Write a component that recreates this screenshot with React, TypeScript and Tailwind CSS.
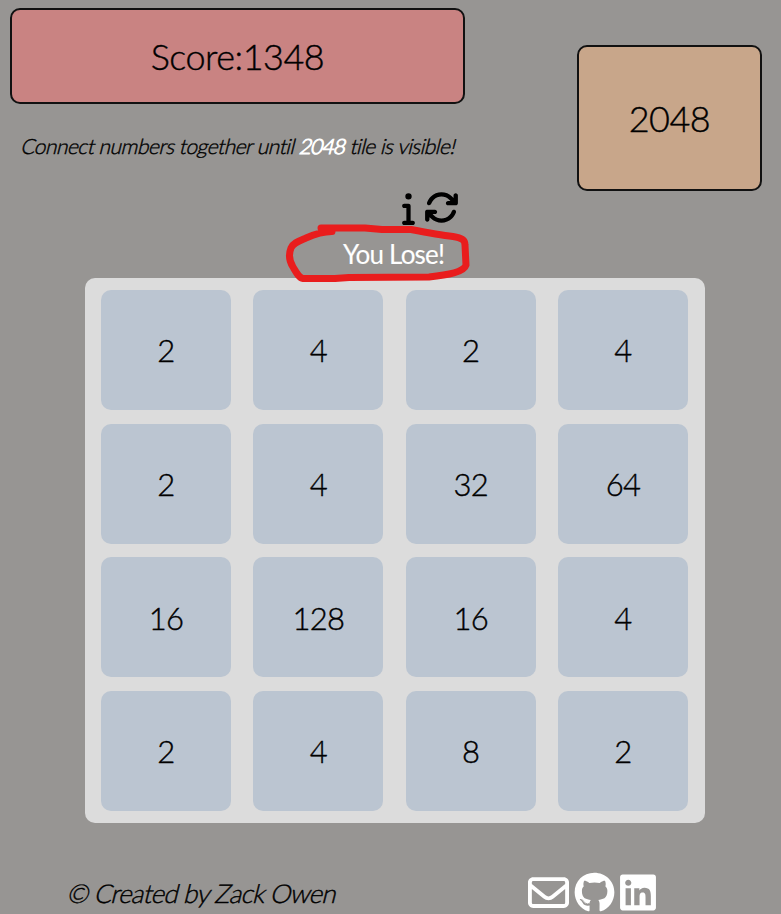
import { FaArrowsRotate, FaGithub, FaInfo, FaLinkedin, FaRegEnvelope } from "react-icons/fa6";

const board = [
  [2, 4, 2, 4],
  [2, 4, 32, 64],
  [16, 128, 16, 4],
  [2, 4, 8, 2],
];

function Header() {
  return (
    <header className="flex h-[189px] items-start justify-between pl-2.5 pr-[19px] pt-2">
      <div>
        <div className="flex h-24 w-[455px] items-center justify-center rounded-[10px] border-2 border-[#111] bg-[#c98382] text-[36px] tracking-[-0.5px]">
          Score:1348
        </div>
        <p className="ml-[12px] mt-[29px] w-max -skew-x-14 whitespace-nowrap text-[21px] leading-[26px] tracking-[-0.53px]">
          Connect numbers together until <span className="tracking-[-0.8px] text-white [-webkit-text-stroke:1px_white]">2048</span> tile is visible!
        </p>
      </div>
      <div className="mt-[37px] flex h-[146px] w-[185px] items-center justify-center rounded-[10px] border-2 border-[#111] bg-[#c8a68a] text-[36px] tracking-[-0.5px]">
        2048
      </div>
    </header>
  );
}

function Board() {
  return (
    <main className="ml-[85px] grid h-[545px] w-[620px] grid-cols-[repeat(4,130px)] grid-rows-[repeat(4,120px)] content-between justify-between rounded-[10px] bg-[#dcdcdc] py-3 pl-4 pr-[17px]">
      {board.flat().map((value, i) => (
        <div key={i} className="flex items-center justify-center rounded-[10px] bg-[#bbc5d1] pt-px text-[31px] tracking-[-0.7px]">
          {value}
        </div>
      ))}
    </main>
  );
}

export default function App() {
  return (
    <div className="h-[914px] w-[781px] overflow-hidden bg-[#979593] font-['Lato',sans-serif] font-light text-black [-webkit-text-stroke:0.4px_black]">
      <Header />
      <div className="flex h-[37px] items-start gap-[8px] pl-[398px] pt-[1px]">
        <FaInfo className="mt-[1px] h-[34px] w-[21px]" />
        <FaArrowsRotate className="-ml-[3px] size-[35px]" />
      </div>
      <div className="relative h-[52px]">
        <p className="pl-[343px] pt-3 text-[26px] font-normal leading-8 tracking-[-0.8px] text-white [-webkit-text-stroke:0.1px_white]">You Lose!</p>
        <svg className="absolute left-[280px] -top-[6px]" width="200" height="66" viewBox="280 220 200 66" fill="none" stroke="#e91d1d" strokeWidth="7" strokeLinecap="round" strokeLinejoin="round">
          <path d="M321 228 H365 L382 229.500 H411 C424 232 440 235 453 236.500 C462 238 465 240 465 245 L466 265 C464 272 448 275 429 277 L349 277.500 L335 278.500 L303 278.500 C299 278 296 272 293 267 C288 259 289 253 291 248 C293 243 299 241 306 238 C315 234 323 231.500 332 231.500" />
        </svg>
      </div>
      <Board />
      <footer className="flex h-[91px] items-end justify-between pl-[68px] pr-[125px]">
        <p className="pb-[5px] -skew-x-14 text-[26px] leading-8 tracking-[-0.8px]">© Created by Zack Owen</p>
        <div className="flex items-center gap-[5px] pb-[1px] text-white">
          <FaRegEnvelope className="size-[41px]" />
          <FaGithub className="size-[41px]" />
          <FaLinkedin className="h-[41px] w-[36px]" />
        </div>
      </footer>
    </div>
  );
}
